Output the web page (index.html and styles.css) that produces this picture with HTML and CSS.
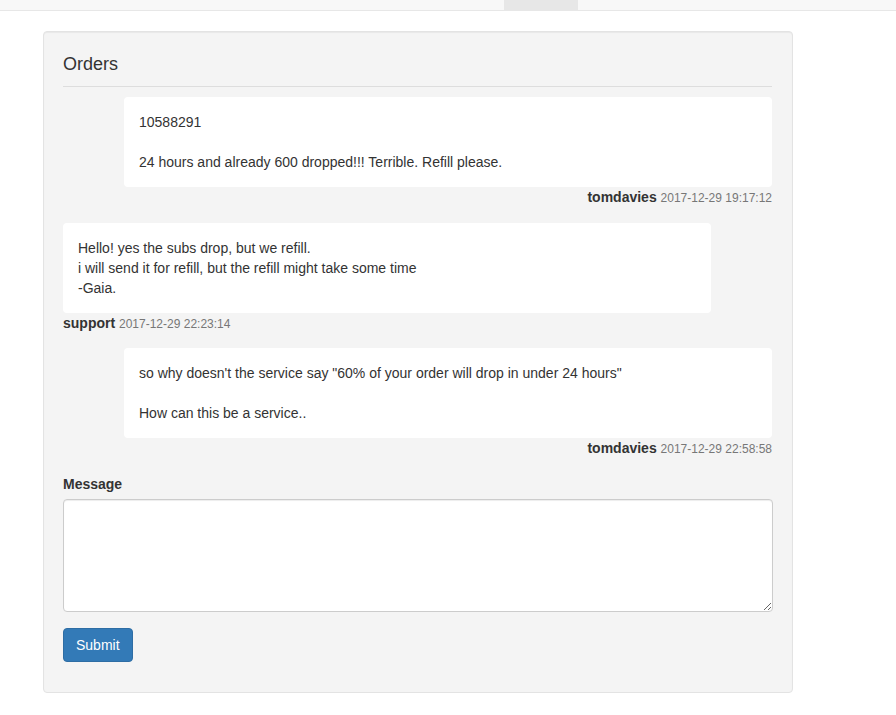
FILE: index.html
```html
<!DOCTYPE html>
<html>
<head>
  <title>Orders</title>
  <link rel="stylesheet" href="styles.css">
</head>
<body>
  <div class="topbar">
    <span class="topbar-active"></span>
  </div>

  <div class="panel">
    <h3 class="panel-title">Orders</h3>

    <div class="thread">
      <div class="msg msg-own">
        <div class="bubble">10588291<br><br>24 hours and already 600 dropped!!! Terrible. Refill please.</div>
        <div class="meta"><strong>tomdavies</strong> <span class="date">2017-12-29 19:17:12</span></div>
      </div>

      <div class="msg msg-support">
        <div class="bubble">Hello! yes the subs drop, but we refill.<br>i will send it for refill, but the refill might take some time<br>-Gaia.</div>
        <div class="meta"><strong>support</strong> <span class="date">2017-12-29 22:23:14</span></div>
      </div>

      <div class="msg msg-own">
        <div class="bubble">so why doesn't the service say "60% of your order will drop in under 24 hours"<br><br>How can this be a service..</div>
        <div class="meta"><strong>tomdavies</strong> <span class="date">2017-12-29 22:58:58</span></div>
      </div>
    </div>

    <form class="reply">
      <label class="label" for="message">Message</label>
      <textarea class="textarea" id="message"></textarea>
      <button class="submit" type="button">Submit</button>
    </form>
  </div>
</body>
</html>
```

FILE: styles.css
```css
body {
  margin: 0;
  font-family: "Liberation Sans", Arial, sans-serif;
  font-size: 14px;
  line-height: 20px;
  color: #333;
  background: #fff;
}

.topbar {
  height: 10px;
  background: #f8f8f8;
  border-bottom: 1px solid #e7e7e7;
  display: flex;
}

.topbar-active {
  width: 74px;
  margin-left: 504px;
  background: #e7e7e7;
}

.panel {
  width: 710px;
  margin: 20px 0 0 43px;
  padding: 20px 19px 30px;
  background: #f4f4f4;
  border: 1px solid #e3e3e3;
  border-radius: 4px;
  box-shadow: inset 0 1px 1px rgba(0, 0, 0, 0.05);
}

.panel-title {
  margin: 0 1px 10px 0;
  padding-bottom: 10px;
  font-size: 18px;
  font-weight: 400;
  line-height: 24px;
  border-bottom: 1px solid #ddd;
}

.thread {
  display: flex;
  flex-direction: column;
  gap: 15px;
}

.msg {
  display: flex;
  flex-direction: column;
}

.msg:first-child {
  margin-bottom: 1px;
}

.msg-own {
  align-items: flex-end;
  margin-right: 1px;
}

.msg-support {
  align-items: flex-start;
}

.bubble {
  width: 618px;
  padding: 15px;
  background: #fff;
  border-radius: 4px;
}

.meta {
  height: 20px;
  line-height: 20px;
}

.meta strong {
  font-weight: 700;
}

.date {
  font-size: 12px;
  line-height: 14px;
  color: #777;
}

.reply {
  margin-top: 16px;
  display: flex;
  flex-direction: column;
  align-items: flex-start;
}

.label {
  font-weight: 700;
  margin-bottom: 5px;
}

.textarea {
  box-sizing: border-box;
  width: 100%;
  height: 113px;
  padding: 6px 12px;
  font: inherit;
  border: 1px solid #ccc;
  border-radius: 4px;
  box-shadow: inset 0 1px 1px rgba(0, 0, 0, 0.075);
  resize: vertical;
}

.submit {
  margin-top: 16px;
  padding: 6px 12px;
  font: inherit;
  color: #fff;
  background: #337ab7;
  border: 1px solid #2e6da4;
  border-radius: 4px;
  cursor: pointer;
}
```
